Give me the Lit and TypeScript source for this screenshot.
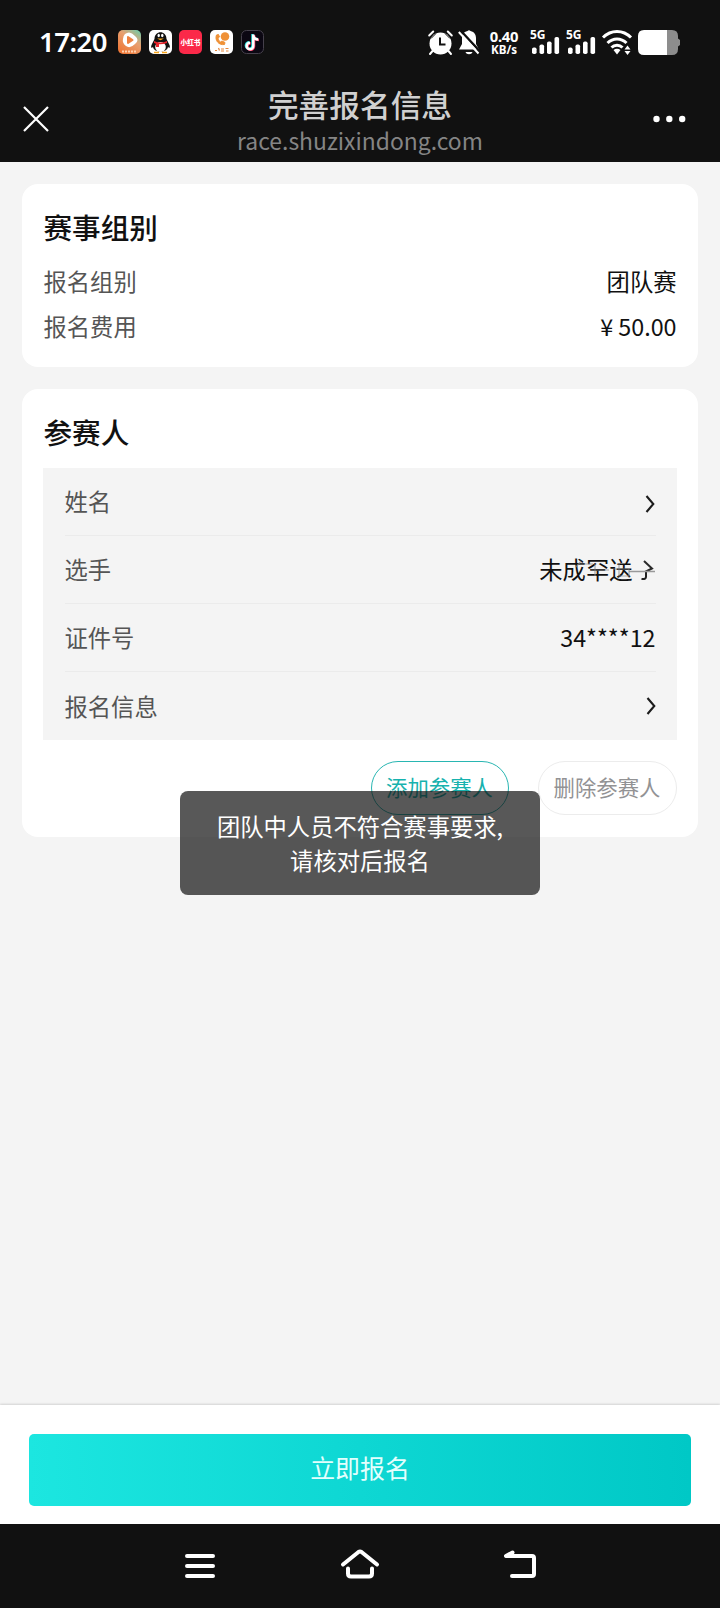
import { LitElement, html, css, svg } from "lit";
import { customElement } from "lit/decorators.js";

const alarm = svg`<g fill="#fff"><circle cx="12.500" cy="13.500" r="11"/><path d="M4.500 21l-2.500 3M20.500 21l2.500 3M1.200 5.500l4-4M23.800 5.500L19.800 1.500" stroke="#fff" stroke-width="2" stroke-linecap="round"/><path d="M3 8.500L8 3.500M22 8.500L17 3.500" stroke="#111" stroke-width="1"/><path d="M12 7.500v7h5.500" fill="none" stroke="#111" stroke-width="2"/></g>`;

const chevron = html`<svg class="chev" width="10" height="18" viewBox="0 0 10 18"><path d="M1.500 1L8.300 9L1.500 17" fill="none" stroke="#1c1c1c" stroke-width="2.100"/></svg>`;

const signal = html`<div class="sig"><span>5G</span><svg width="28" height="18" viewBox="0 0 28 18" fill="#fff"><rect x="0" y="11.500" width="4.600" height="6.500" rx="1.800"/><rect x="7.500" y="8.500" width="4.600" height="9.500" rx="1.800"/><rect x="15" y="5.500" width="4.600" height="12.500" rx="1.800"/><rect x="22.500" y="1" width="4.600" height="17" rx="1.800"/></svg></div>`;

@customElement("app-root")
export class AppRoot extends LitElement {
  static styles = css`
    :host { display: flex; flex-direction: column; height: 1608px; width: 720px; position: relative; overflow: hidden;
      background: #f4f4f4; color: #111; font: 23.3px/34px "Noto Sans CJK SC", "Noto Sans", sans-serif; }
    * { box-sizing: border-box; }
    svg { display: block; flex: none; overflow: visible; }
    .status { height: 84px; background: #111; color: #fff; display: flex; align-items: center; padding: 0 40px 0 39px; flex: none; font-family: "Noto Sans", sans-serif; }
    .time { font-size: 27.500px; font-weight: 600; line-height: 30px; width: 79px; letter-spacing: -0.500px; }
    .apps { display: flex; gap: 7.700px; }
    .right { margin-left: auto; display: flex; align-items: center; }
    .bell { margin-left: 5px; }
    .bat { margin-left: 6px; }
    .rate { font-size: 14.800px; font-weight: 700; text-align: center; width: 34px; margin: 0 9px 0 7px; white-space: nowrap; display: flex; flex-direction: column; align-items: center; }
    .rate span { line-height: 14px; letter-spacing: -0.200px; }
    .rate b { line-height: 13px; font-size: 11.600px; font-weight: 700; }
    .sig { width: 36px; height: 24px; position: relative; display: flex; align-items: flex-end; padding-left: 2px; }
    .sig span { position: absolute; left: 0; top: -1px; font-size: 12px; line-height: 12px; font-weight: 700; }
    .head { height: 78px; background: #111; flex: none; display: grid; grid-template-columns: 1fr auto 1fr; padding: 0 34px 0 23px; }
    .head svg { margin-top: 22px; }
    .more { justify-self: end; }
    .titles { text-align: center; width: 300px; margin-left: 11px; }
    .title { font-size: 30.700px; line-height: 40px; font-weight: 500; color: #d0d0d0; }
    .url { font-size: 22.900px; line-height: 32px; color: #858585; white-space: nowrap; }
    .page { flex: 1; padding: 22px 22px 0; display: flex; flex-direction: column; gap: 22px; }
    .card { background: #fff; border-radius: 16px; padding: 23px 21.500px 0; }
    .first { height: 183px; }
    .second { height: 448px; }
    h2 { margin: 0; font-size: 28.600px; line-height: 40px; font-weight: 500; color: #111; }
    .kv { display: flex; justify-content: space-between; height: 45px; line-height: 45px; }
    .first h2 { margin-bottom: 12px; }
    .label { color: #555; }
    .list { background: #f4f4f4; margin: 16px 0 0 -0.500px; height: 272px; padding: 0 21px 0 21.500px; }
    .row { height: 68px; border-bottom: 1.500px solid #ebebeb; display: flex; justify-content: space-between; align-items: center; }
    .row span { padding-bottom: 2px; }
    .row:last-child { border-bottom: 0; }
    .row:last-child span { padding-bottom: 0; }
    .low { padding-top: 4px; padding-right: 1px; }
    .low span { padding-bottom: 6px; }
    .mix { display: flex; align-items: center; }
    .acts { display: flex; justify-content: flex-end; gap: 29px; margin-top: 21px; }
    .pill { width: 138px; height: 54px; border: 1px solid #29b6b2; border-radius: 27px; color: #17b2ae; text-align: center; font-size: 21.400px; line-height: 49px; }
    .pill.del { width: 139px; border-color: #ececec; color: #929294; }
    .toast { position: absolute; left: 180px; top: 791px; width: 360px; height: 104px; border-radius: 8px; background: rgba(17,17,17,.7); color: #fff; text-align: center; padding: 18px 0 0; }
    .foot { height: 119px; background: #fff; box-shadow: 0 -1px 2px rgba(0,0,0,.14); padding: 29px 29px 0; flex: none; }
    .go { height: 72px; border-radius: 5px; background: linear-gradient(90deg,#1ce6e0,#00c8c6); color: #e3fffd; font-size: 24.900px; line-height: 67px; text-align: center; }
    .nav { height: 84px; background: #111; flex: none; display: grid; grid-template-columns: repeat(3,160px); justify-content: center; justify-items: center; align-items: center; }
  `;
  render() {
    return html`
      <div class="status">
        <div class="time">17:20</div>
        <div class="apps">
          <svg width="23" height="24" viewBox="0 0 23 24"><defs><linearGradient id="g" x1="1" y1="0" x2=".3" y2="1"><stop offset="0" stop-color="#63d0b0"/><stop offset=".45" stop-color="#e8a070"/><stop offset="1" stop-color="#ee7838"/></linearGradient></defs><rect width="23" height="24" rx="5" fill="url(#g)"/><path d="M7 4q5-4 10 2 5 4 0 8-5 5-9 2-4-3-3-7 0-3 2-5z" fill="#fff"/><path d="M10 7l4.500 3L10 13z" fill="#ee8040" stroke="#ee8040" stroke-width="2" stroke-linejoin="round"/><path d="M4 21.500h15" stroke="#ffd2b0" stroke-width="2" stroke-dasharray="2 1"/></svg>
          <svg width="23" height="24" viewBox="0 0 23 24"><rect width="23" height="24" rx="5" fill="#fff"/><path d="M5.500 9c0-9 12-9 12 0l3 6c1 3-.3 3.500-1.500 2-1 6-14 6-15 0-1.200 1.500-2.500 1-1.500-2z" fill="#111"/><ellipse cx="11.500" cy="17" rx="5.300" ry="5" fill="#fff"/><ellipse cx="9.700" cy="5.500" rx="1.200" ry="1.700" fill="#fff"/><ellipse cx="13.300" cy="5.500" rx="1.200" ry="1.700" fill="#fff"/><path d="M8 8.500h7l-3.500 1.800z" fill="#f6a51c"/><path d="M5 11q6.500 3 13 0v2q-4 1.500-8 1.300V17H7v-3.200l-2-.8z" fill="#e8232c"/><path d="M5 22.500h5M13 22.500h5" stroke="#f6a51c" stroke-width="1.600"/></svg>
          <svg width="23" height="24" viewBox="0 0 23 24"><rect width="23" height="24" rx="5" fill="#fb2949"/><text x="11.500" y="15" fill="#fff" font-family="Noto Sans CJK SC" font-size="6.700" font-weight="900" text-anchor="middle">小红书</text></svg>
          <svg width="23" height="24" viewBox="0 0 23 24"><rect width="23" height="24" rx="5" fill="#fff"/><circle cx="15" cy="6.500" r="4.300" fill="#ef9136"/><path d="M6.500 5c-2 5 2 10.500 8 9.500l.5-2-3-1.500-1.500 1C9 11 8 9.500 8 8l1.500-1L8.500 4.500z" fill="#ef9136" stroke="#ef9136"/><path d="M5 20.500h2M8.500 18l1 2.500M11 19h3M11 21h3M15.500 18.500h3M16 21h2.500" stroke="#e5873c" stroke-width="1.200"/></svg>
          <svg width="23" height="24" viewBox="0 0 23 24"><rect x=".5" y=".5" width="22" height="23" rx="5" fill="#0b0712" stroke="#45404b"/><g fill="none" stroke-width="2.500"><path d="M11.500 4v11.500a3.300 3.300 0 1 1-3.300-3.300M11.500 5c.5 2.500 2.500 4 5 4" stroke="#2be5e5"/><path d="M13 5v11.500a3.300 3.300 0 1 1-3.300-3.300M13 6c.5 2.500 2.500 4 5 4" stroke="#fb2c58"/><path d="M12.300 4.500V16A3.300 3.300 0 1 1 9 12.700M12.300 5.500c.5 2.500 2.500 4 5 4" stroke="#fff"/></g></svg>
        </div>
        <div class="right">
          <svg width="25" height="25" viewBox="0 0 25 25">${alarm}</svg>
          <svg class="bell" width="22" height="25" viewBox="0 0 22 25"><path d="M9.500 1q1.500-1.500 3 0c4 1 5.500 4 5.500 7v6l3 5.500H1l3-5.500V8c0-3 1.500-6 5.500-7zM7.500 22h7c-1 3-6 3-7 0z" fill="#fff"/><path d="M2.500 .5L22.500 22" stroke="#111" stroke-width="2.500"/><path d="M.8 2L20.500 23.500" stroke="#fff" stroke-width="2"/></svg>
          <div class="rate"><span>0.40</span><b>KB/s</b></div>
          ${signal}${signal}
          <svg width="30" height="25" viewBox="0 0 30 25"><g fill="none" stroke="#fff" stroke-width="3"><path d="M1 7.500C9-.5 21-.5 29 7.500M5.500 13c5.500-5.500 13.500-5.500 19 0M9.500 17.500c3-3 8-3 11 0"/></g><path d="M11.500 20q3.500-2.500 7 0L15 24.500zM22.500 19.500h6l-3-4zM22.500 21h6l-3 4z" fill="#fff"/></svg>
          <svg class="bat" width="42" height="25" viewBox="0 0 42 25"><path d="M29 0h5q6 0 6 6v2.500l2 1.500v5l-2 1.500V19q0 6-6 6h-5z" fill="#8d8d8d"/><path d="M29 0v25H6q-6 0-6-6V6q0-6 6-6z" fill="#fff"/></svg>
        </div>
      </div>
      <div class="head">
        <svg width="26" height="26" viewBox="0 0 26 26"><path d="M1 1L25 25M25 1L1 25" stroke="#fff" stroke-width="2.200"/></svg>
        <div class="titles"><div class="title">完善报名信息</div><div class="url">race.shuzixindong.com</div></div>
        <svg class="more" width="33" height="26" viewBox="0 0 33 26" fill="#fff"><circle cx="3.500" cy="13" r="3.200"/><circle cx="16.300" cy="13" r="3.200"/><circle cx="29.200" cy="13" r="3.200"/></svg>
      </div>
      <div class="page">
        <section class="card first">
          <h2>赛事组别</h2>
          <div class="kv"><span class="label">报名组别</span><span>团队赛</span></div>
          <div class="kv"><span class="label">报名费用</span><span>¥ 50.00</span></div>
        </section>
        <section class="card second">
          <h2>参赛人</h2>
          <div class="list">
            <div class="row low"><span class="label">姓名</span>${chevron}</div>
            <div class="row"><span class="label">选手</span><div class="mix"><span>未成罕送</span>
              <svg class="smear" width="23" height="24" viewBox="0 0 23 24" fill="none"><path d="M11 3L19 10.500L12 14" stroke="#2a2a2a" stroke-width="2"/><path d="M13 14v5q0 2.500-4.500 2" stroke="#222" stroke-width="2"/><path d="M-4 13.500H22" stroke="#999" stroke-width="1.500"/><path d="M-52 3l-5 6M-54 6h14M-42 12h18M-38 6v12M-20 11h16M-14 6v12h10v-8" stroke="#888" stroke-width="1.200" opacity=".7"/></svg></div></div>
            <div class="row"><span class="label">证件号</span><span>34****12</span></div>
            <div class="row"><span class="label">报名信息</span>${chevron}</div>
          </div>
          <div class="acts"><div class="pill">添加参赛人</div><div class="pill del">删除参赛人</div></div>
        </section>
      </div>
      <div class="foot"><div class="go">立即报名</div></div>
      <div class="nav">
        <svg width="30" height="26" viewBox="0 0 30 26"><path d="M2 3h26M2 13h26M2 23h26" stroke="#fff" stroke-width="4" stroke-linecap="round"/></svg>
        <svg width="38" height="30" viewBox="0 0 38 30"><path d="M2 13.500L17.500 1q1.500-1 3 0L36 13.500M7 17.500v5q0 3 3 3h18q3 0 3-3v-5" fill="none" stroke="#fff" stroke-width="4" stroke-linecap="round" stroke-linejoin="round"/></svg>
        <svg width="32" height="30" viewBox="0 0 32 30"><path d="M8.500 1.500L2 5h26q2 0 2 2v16q0 2-2 2H8" fill="none" stroke="#fff" stroke-width="4" stroke-linecap="round" stroke-linejoin="round"/></svg>
      </div>
      <div class="toast">团队中人员不符合赛事要求,<br />请核对后报名</div>
    `;
  }
}
